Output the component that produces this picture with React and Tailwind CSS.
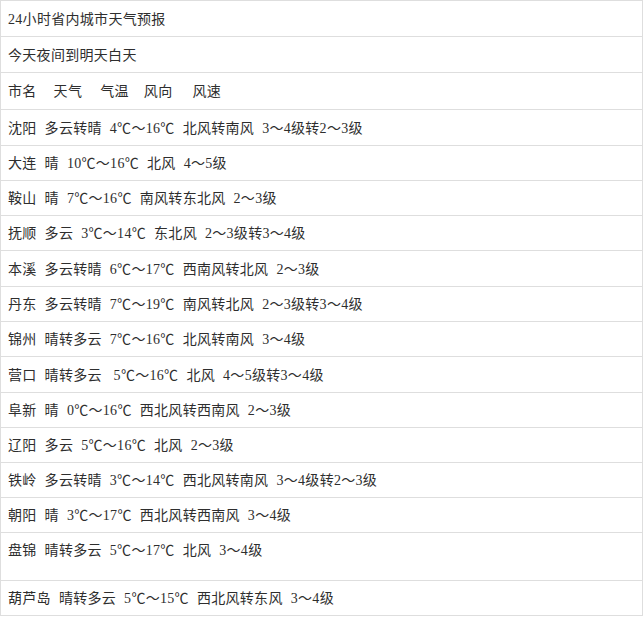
import React from 'react';

const rows = [
  { h: 'h-[36px]', parts: ['24小时省内城市天气预报'] },
  { h: 'h-[36px]', parts: ['今天夜间到明天白天'] },
  { h: 'h-[37px]', header: true },
  { h: 'h-[36px]', parts: ['沈阳', '多云转晴', '4℃～16℃', '北风转南风', '3～4级转2～3级'] },
  { h: 'h-[35px]', parts: ['大连', '晴', '10℃～16℃', '北风', '4～5级'] },
  { h: 'h-[35px]', parts: ['鞍山', '晴', '7℃～16℃', '南风转东北风', '2～3级'] },
  { h: 'h-[35px]', parts: ['抚顺', '多云', '3℃～14℃', '东北风', '2～3级转3～4级'] },
  { h: 'h-[36px]', parts: ['本溪', '多云转晴', '6℃～17℃', '西南风转北风', '2～3级'] },
  { h: 'h-[35px]', parts: ['丹东', '多云转晴', '7℃～19℃', '南风转北风', '2～3级转3～4级'] },
  { h: 'h-[35px]', parts: ['锦州', '晴转多云', '7℃～16℃', '北风转南风', '3～4级'] },
  { h: 'h-[36px]', parts: ['营口', '晴转多云', '\u00a05℃～16℃', '北风', '4～5级转3～4级'] },
  { h: 'h-[35px]', parts: ['阜新', '晴', '0℃～16℃', '西北风转西南风', '2～3级'] },
  { h: 'h-[35px]', parts: ['辽阳', '多云', '5℃～16℃', '北风', '2～3级'] },
  { h: 'h-[35px]', parts: ['铁岭', '多云转晴', '3℃～14℃', '西北风转南风', '3～4级转2～3级'] },
  { h: 'h-[35px]', parts: ['朝阳', '晴', '3℃～17℃', '西北风转西南风', '3～4级'] },
  { h: 'h-[48px]', top: true, parts: ['盘锦', '晴转多云', '5℃～17℃', '北风', '3～4级'] },
  { h: 'h-[35px]', parts: ['葫芦岛', '晴转多云', '5℃～15℃', '西北风转东风', '3～4级'] },
];

const Header = () => (
  <div className="flex">
    <span>市名</span>
    <span className="ml-[17px]">天气</span>
    <span className="ml-[18px]">气温</span>
    <span className="ml-[15px]">风向</span>
    <span className="ml-[20px]">风速</span>
  </div>
);

export default function App() {
  return (
    <div
      className="w-[643px] bg-white text-[14px] tracking-[0.3px] text-[#2e2e2e] border-t border-l border-r border-[#dedede]"
      style={{ fontFamily: '"Liberation Serif", "Noto Sans CJK SC", serif' }}
    >
      {rows.map((r, i) => (
        <div
          key={i}
          className={`${r.h} flex ${r.top ? 'items-start pt-[8px]' : 'items-center pt-[2px]'} px-[7px] border-b border-[#dedede] leading-[20px]`}
        >
          {r.header ? (
            <Header />
          ) : (
            <div className="flex gap-[8px] whitespace-pre">
              {r.parts.map((p, j) => (
                <span key={j}>{p}</span>
              ))}
            </div>
          )}
        </div>
      ))}
    </div>
  );
}
